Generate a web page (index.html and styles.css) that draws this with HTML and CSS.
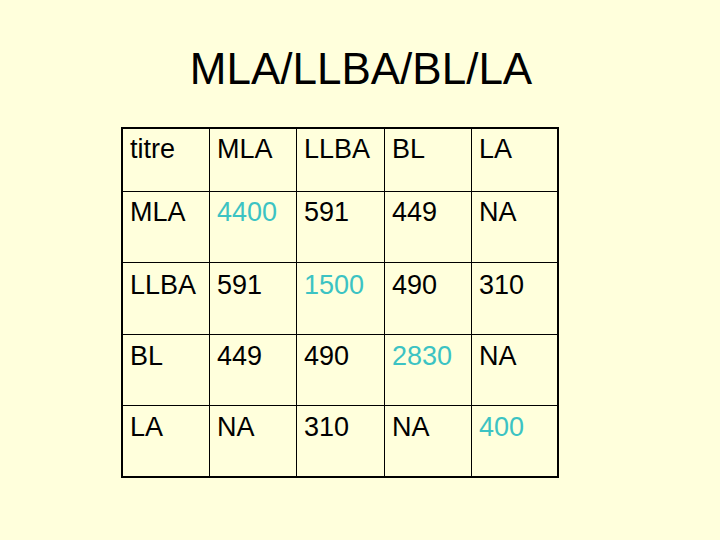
FILE: index.html
```html
<!DOCTYPE html>
<html>
<head>
<meta charset="utf-8">
<title>MLA/LLBA/BL/LA</title>
<link rel="stylesheet" href="styles.css">
</head>
<body>
<h1 class="title">MLA/LLBA/BL/LA</h1>
<div class="matrix">
  <div class="cell r1">titre</div><div class="cell r1">MLA</div><div class="cell r1">LLBA</div><div class="cell r1">BL</div><div class="cell r1 last">LA</div>
  <div class="cell r2">MLA</div><div class="cell r2 diag">4400</div><div class="cell r2">591</div><div class="cell r2">449</div><div class="cell r2 last">NA</div>
  <div class="cell r3">LLBA</div><div class="cell r3">591</div><div class="cell r3 diag">1500</div><div class="cell r3">490</div><div class="cell r3 last">310</div>
  <div class="cell r4">BL</div><div class="cell r4">449</div><div class="cell r4">490</div><div class="cell r4 diag">2830</div><div class="cell r4 last">NA</div>
  <div class="cell r5">LA</div><div class="cell r5">NA</div><div class="cell r5">310</div><div class="cell r5">NA</div><div class="cell r5 last diag">400</div>
</div>
</body>
</html>
```
FILE: styles.css
```css
html, body {
  margin: 0;
  padding: 0;
  background: #ffffdc;
}
body {
  width: 720px;
  height: 540px;
  overflow: hidden;
  font-family: "Liberation Sans", Arial, sans-serif;
  color: #000;
}
.title {
  margin: 43px 0 0 0;
  font-size: 44px;
  font-weight: normal;
  line-height: 51px;
  text-align: center;
  padding-left: 2px;
}
.matrix {
  margin: 33px 0 0 121px;
  width: 434px;
  border: 2px solid #000;
  display: grid;
  grid-template-columns: 87px 87px 88px 87px 85px;
  grid-template-rows: 63px 71px 72px 71px 70px;
}
.cell {
  box-sizing: border-box;
  border-right: 1px solid #000;
  border-bottom: 1px solid #000;
  font-size: 27px;
  line-height: 31px;
  padding: 5px 0 0 7px;
  white-space: nowrap;
}
.cell.r3 { padding-top: 7px; }
.cell.r4 { padding-top: 6px; }
.cell.r5 { padding-top: 6px; border-bottom: none; }
.cell.last { border-right: none; }
.cell.diag { color: #3cc3c3; }
```
